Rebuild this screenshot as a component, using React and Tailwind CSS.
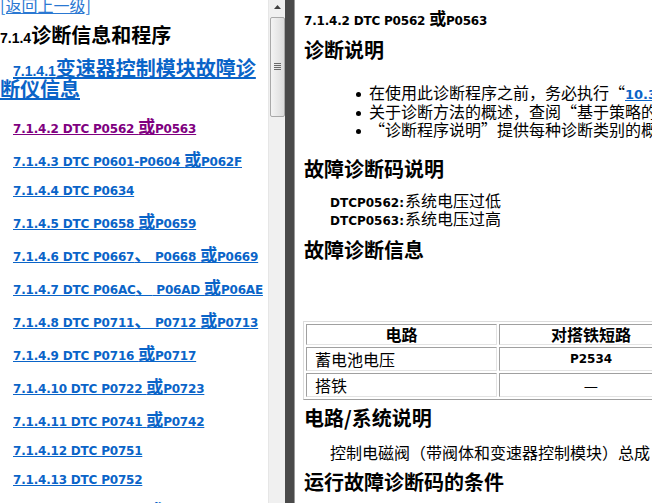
import React from "react";

const CJK_SPAN = "font-['Noto_Sans_CJK_SC',sans-serif] text-[17px] leading-[0]";

function Mixed({ text, cjkClass }) {
  const parts = text.split(/([\u3000-\u303f\u4e00-\u9fff\uff00-\uffef]+)/);
  return parts.map((p, i) =>
    i % 2 === 1 ? (
      <span key={i} className={cjkClass}>
        {p}
      </span>
    ) : (
      <React.Fragment key={i}>{p}</React.Fragment>
    )
  );
}

const items = [
  { t: "7.1.4.2 DTC P0562 或P0563", visited: true },
  { t: "7.1.4.3 DTC P0601-P0604 或P062F" },
  { t: "7.1.4.4 DTC P0634" },
  { t: "7.1.4.5 DTC P0658 或P0659" },
  { t: "7.1.4.6 DTC P0667、 P0668 或P0669" },
  { t: "7.1.4.7 DTC P06AC、 P06AD 或P06AE" },
  { t: "7.1.4.8 DTC P0711、 P0712 或P0713" },
  { t: "7.1.4.9 DTC P0716 或P0717" },
  { t: "7.1.4.10 DTC P0722 或P0723" },
  { t: "7.1.4.11 DTC P0741 或P0742" },
  { t: "7.1.4.12 DTC P0751" },
  { t: "7.1.4.13 DTC P0752" },
  { t: "7.1.4.14 DTC P0756 或P0757" },
];

function NavItem({ t, visited }) {
  const hasCjk = /[\u3000-\u9fff]/.test(t);
  return (
    <div className={hasCjk ? "pt-[17px] pl-[13px]" : "pt-[13px] pl-[13px]"}>
      <div className="h-[16px] leading-[16px] text-[12px] font-bold font-['DejaVu_Sans','Noto_Sans_CJK_SC',sans-serif] tracking-[-0.2px] whitespace-nowrap">
        <a className={visited ? "text-[#800080] underline" : "text-[#0a64c8] underline"}>
          <Mixed text={t} cjkClass={CJK_SPAN} />
        </a>
      </div>
    </div>
  );
}

function Bullet({ children }) {
  return (
    <div className="h-[18.5px] whitespace-nowrap">
      <span className="inline-block w-[5px] h-[5px] rounded-full bg-black align-[2px] mr-[8px]"></span>
      {children}
    </div>
  );
}

const cellBorder =
  "border border-t-[#a0a0a0] border-l-[#a0a0a0] border-b-[#e3e3e3] border-r-[#e3e3e3] p-0";

export default function App() {
  return (
    <div className="w-[652px] h-[503px] flex overflow-hidden bg-white text-black [text-spacing-trim:space-all]">
      {/* Left navigation panel */}
      <div className="w-[268px] shrink-0 h-full overflow-hidden bg-white">
        <div className="mt-[-3px] h-[17px] leading-[17px] text-[16px] font-['Noto_Sans_CJK_SC',sans-serif] whitespace-nowrap">
          <a className="text-[#2a78d2] underline">[返回上一级]</a>
        </div>
        <div className="mt-[9.3px] h-[24px] leading-[24px] text-[20px] font-bold font-['Noto_Sans_CJK_SC',sans-serif] whitespace-nowrap">
          <span className="font-['Liberation_Sans',sans-serif] text-[14px] leading-[0]">7.1.4</span>
          诊断信息和程序
        </div>
        <div className="mt-[9.7px] h-[43px] leading-[21.5px] text-[20px] font-bold font-['Noto_Sans_CJK_SC',sans-serif] indent-[13px] whitespace-nowrap">
          <a className="text-[#0a64c8] underline">
            <span className="font-['Liberation_Sans',sans-serif] font-bold text-[14px] leading-[0]">7.1.4.1</span>
            变速器控制模块故障诊
            <br />
            断仪信息
          </a>
        </div>
        <div className="mt-[3.85px]">
          {items.map((it) => (
            <NavItem key={it.t} t={it.t} visited={it.visited} />
          ))}
        </div>
      </div>

      {/* Scrollbar */}
      <div className="w-[17px] shrink-0 h-full bg-[#f0f0f0] border-l border-[#e6e6e6] flex flex-col items-center">
        <div className="h-[17px] w-full flex justify-center pt-[5px]">
          <svg width="7" height="4" viewBox="0 0 7 4">
            <polygon points="0,4 7,4 3.5,0" fill="#404040" />
          </svg>
        </div>
        <div className="w-[15px] h-[100px] rounded-[2px] border border-[#a9a9a9] bg-linear-to-r from-[#f4f4f4] to-[#dcdcdc] flex items-center justify-center">
          <svg width="7" height="8" viewBox="0 0 7 8">
            <rect x="0" y="0" width="7" height="1" fill="#6a6a6a" />
            <rect x="0" y="2" width="7" height="1" fill="#6a6a6a" />
            <rect x="0" y="4" width="7" height="1" fill="#6a6a6a" />
            <rect x="0" y="6" width="7" height="1" fill="#6a6a6a" />
          </svg>
        </div>
      </div>

      {/* Splitter */}
      <div className="w-[10px] shrink-0 h-full bg-[#4a4a4a] border-r border-[#9a9a9a]"></div>

      {/* Right content panel */}
      <div className="flex-1 min-w-0 h-full overflow-hidden bg-white pl-[9px] whitespace-nowrap">
        <div className="mt-[11px] h-[20px] leading-[20px] text-[12px] font-bold font-['DejaVu_Sans','Noto_Sans_CJK_SC',sans-serif] tracking-[-0.2px]">
          7.1.4.2 DTC P0562 <span className={CJK_SPAN}>或</span>P0563
        </div>
        <div className="mt-[7px] h-[24px] leading-[24px] text-[20px] font-bold font-['Noto_Sans_CJK_SC',sans-serif]">
          诊断说明
        </div>
        <div className="mt-[21px] pl-[52px] text-[16px] leading-[18.5px] font-['Noto_Sans_CJK_SC',sans-serif]">
          <Bullet>
            在使用此诊断程序之前，务必执行“
            <a className="text-[#0a64c8] underline font-bold text-[13px] leading-[0] font-['DejaVu_Sans',sans-serif]">
              10.3.3.1 诊断系统检查 - 车辆
            </a>
            ”。
          </Bullet>
          <Bullet>关于诊断方法的概述，查阅“基于策略的诊断”。</Bullet>
          <Bullet>“诊断程序说明”提供每种诊断类别的概述。</Bullet>
        </div>
        <div className="mt-[18px] h-[24px] leading-[24px] text-[20px] font-bold font-['Noto_Sans_CJK_SC',sans-serif]">
          故障诊断码说明
        </div>
        <div className="mt-[13px] pl-[26px] text-[12px] leading-[18px] font-bold font-['DejaVu_Sans','Noto_Sans_CJK_SC',sans-serif]">
          <div className="h-[18px]">
            DTCP0562:
            <span className="font-['Noto_Sans_CJK_SC',sans-serif] font-normal text-[16px] leading-[0] ml-[1px]">系统电压过低</span>
          </div>
          <div className="h-[18px]">
            DTCP0563:
            <span className="font-['Noto_Sans_CJK_SC',sans-serif] font-normal text-[16px] leading-[0] ml-[1px]">系统电压过高</span>
          </div>
        </div>
        <div className="mt-[8px] h-[24px] leading-[24px] text-[20px] font-bold font-['Noto_Sans_CJK_SC',sans-serif]">
          故障诊断信息
        </div>

        <table className="mt-[59.5px] ml-[-1px] w-[383px] table-fixed border-separate border-spacing-[2px] border border-t-[#dcdcdc] border-l-[#dcdcdc] border-b-[#a0a0a0] border-r-[#a0a0a0] font-['Noto_Sans_CJK_SC',sans-serif] text-[16px]">
          <tbody>
            <tr>
              <td className={cellBorder + " w-[191px] h-[21px] text-center font-bold leading-[19px]"}>电路</td>
              <td className={cellBorder + " h-[21px] text-center font-bold leading-[19px]"}>对搭铁短路</td>
            </tr>
            <tr>
              <td className={cellBorder + " h-[24px] pl-[8px] leading-[22px]"}>蓄电池电压</td>
              <td className={cellBorder + " h-[24px] text-center leading-[22px] font-bold text-[12px] font-['DejaVu_Sans',sans-serif]"}>
                P2534
              </td>
            </tr>
            <tr>
              <td className={cellBorder + " h-[24px] pl-[8px] leading-[22px]"}>搭铁</td>
              <td className={cellBorder + " h-[24px] text-center leading-[22px]"}>—</td>
            </tr>
          </tbody>
        </table>

        <div className="mt-[6.3px] h-[24px] leading-[24px] text-[20px] font-bold font-['Noto_Sans_CJK_SC',sans-serif]">
          电路/系统说明
        </div>
        <div className="mt-[10.7px] pl-[26px] h-[22px] leading-[22px] text-[16px] font-['Noto_Sans_CJK_SC',sans-serif] [font-feature-settings:'halt'_0,'chws'_0]">
          控制电磁阀（带阀体和变速器控制模块）总成
        </div>
        <div className="mt-[7.3px] h-[24px] leading-[24px] text-[20px] font-bold font-['Noto_Sans_CJK_SC',sans-serif]">
          运行故障诊断码的条件
        </div>
      </div>
    </div>
  );
}
